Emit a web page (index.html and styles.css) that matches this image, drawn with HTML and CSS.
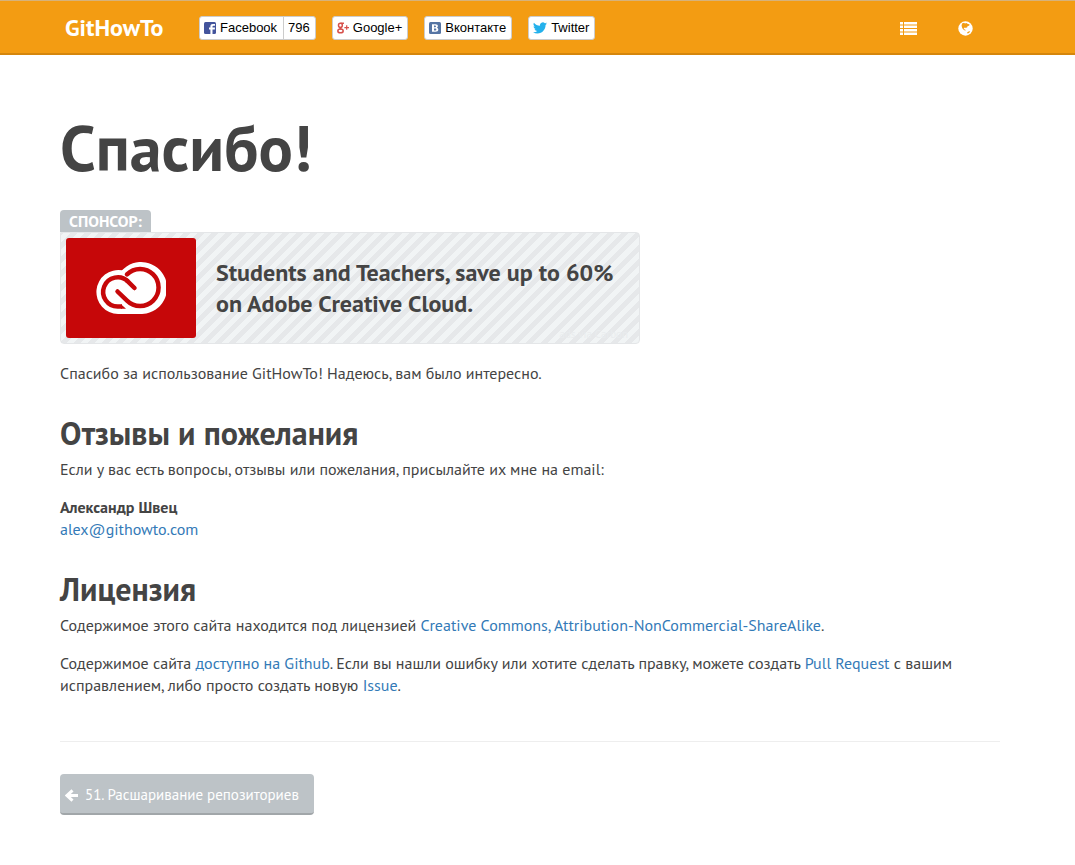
FILE: index.html
```html
<!DOCTYPE html>
<html lang="ru">
<head>
<meta charset="utf-8">
<title>GitHowTo — Спасибо!</title>
<link rel="stylesheet" href="styles.css">
</head>
<body>
<header class="navbar">
  <div class="container navbar-inner">
    <a class="brand" href="#">GitHowTo</a>
    <div class="likes">
      <button class="like" type="button">
        <svg class="like-icon" viewBox="0 0 12 12"><rect width="12" height="12" rx="1.5" fill="#43549c"/><path fill="#fff" d="M6.400 12V7.400H5V5.600h1.400V4.400C6.400 2.800 7.300 2 8.800 2H11v1.800H9.300c-.6 0-.8.3-.8.8v1H11l-.2 1.800H8.500V12z"/></svg>
        <span>Facebook</span><span class="like-count">796</span>
      </button>
      <button class="like" type="button">
        <svg class="like-icon" viewBox="0 0 13 12"><g fill="none" stroke="#d6504b" stroke-width="1.600"><ellipse cx="3.700" cy="3.100" rx="2.100" ry="2.300"/><path d="M4 .8h3.500M4.200 5.400c-1.500.6-1 1.200.6 1.900"/><ellipse cx="3.800" cy="9.200" rx="2.900" ry="2"/><path d="M8 5.500h5M10.500 3v5" stroke-width="1.300"/></g></svg>
        <span>Google+</span>
      </button>
      <button class="like" type="button">
        <svg class="like-icon" viewBox="0 0 12 12"><rect width="12" height="12" rx="1.5" fill="#5675a4"/><path fill="#fff" fill-rule="evenodd" d="M3 2.200h3.500c1.600 0 2.400.7 2.400 1.900 0 .8-.4 1.300-1 1.600.9.300 1.400.9 1.400 1.900 0 1.500-1 2.200-2.800 2.200H3zM5 3.600v1.600h1c.7 0 1-.3 1-.8s-.3-.8-1-.8zm0 2.900v1.900h1.200c.7 0 1.100-.3 1.100-1s-.4-.9-1.100-.9z"/></svg>
        <span>Вконтакте</span>
      </button>
      <button class="like" type="button">
        <svg class="like-icon twitter" viewBox="0 0 24 20"><path fill="#24b1ec" d="M24 2.400c-.9.400-1.800.6-2.800.8 1-.6 1.800-1.600 2.200-2.700-1 .6-2 1-3.100 1.200A4.900 4.900 0 0 0 12 6.100C7.700 5.900 4.100 3.900 1.700.9a4.900 4.900 0 0 0 1.500 6.600c-.8 0-1.600-.2-2.200-.6v.1c0 2.400 1.700 4.400 3.900 4.800-.7.200-1.500.2-2.200.1.600 2 2.400 3.400 4.600 3.400A9.900 9.900 0 0 1 0 17.300 14 14 0 0 0 7.500 19.500c9.100 0 14.300-7.700 14-14.600 1-.7 1.800-1.500 2.500-2.500z"/></svg>
        <span>Twitter</span>
      </button>
    </div>
    <nav class="tools">
      <a href="#" aria-label="Содержание"><svg width="17" height="13" viewBox="0 0 17 13" fill="#fff"><path d="M0 0h3v2.500H0zM4 0h13v2.500H4zM0 3.500h3V6H0zM4 3.500h13V6H4zM0 7h3v2.500H0zM4 7h13v2.500H4zM0 10.500h3V13H0zM4 10.500h13V13H4z"/></svg></a>
      <a href="#" aria-label="Язык"><svg width="15" height="15" viewBox="0 0 15 15"><circle cx="7.500" cy="7.500" r="7.200" fill="#fff"/><path fill="#f39c12" d="M4 2.600 6 1.800 7 2.500 8.300 2 10 3l1.500.2-.3 1.500-1.500.3-.5 1.300-1.500.8-.5-.5-1.400.4.200 1.200 1.200.4.400 1.200-1.700-.8L4.300 7.200 3.600 4.800zM9.200 11.300l2-1 1 .3-1.200 1.500-1.600.5z"/></svg></a>
    </nav>
  </div>
</header>
<main>
  <div class="container">
    <h1>Спасибо!</h1>
    <aside class="sponsor">
      <div class="sponsor-label">СПОНСОР:</div>
      <div class="sponsor-box">
        <a class="sponsor-logo" href="#" aria-label="Adobe Creative Cloud"><svg width="70" height="52" viewBox="0 0 70 52"><path fill="#fff" d="M22 52a22 22 0 1 1 4-43.700A26 26 0 1 1 44 52z"/><g fill="none" stroke="#c60709" stroke-width="4.500"><path d="M26 44.500H22A14.600 14.600 0 1 1 32 19.500"/><path d="M31 18.600 38.500 26M21.500 29.500 31 38.600A18.500 18.500 0 1 0 31 12.400" stroke-linecap="round"/></g><path fill="#c60709" d="M25 42.250l5 4.500h-5z"/></svg></a>
        <a class="sponsor-text" href="#">Students and Teachers, save up to 60% on Adobe Creative Cloud.</a>
        <a class="sponsor-via" href="#">ads via Carbon</a>
      </div>
    </aside>
    <p>Спасибо за использование GitHowTo! Надеюсь, вам было интересно.</p>
    <h2>Отзывы и пожелания</h2>
    <p>Если у вас есть вопросы, отзывы или пожелания, присылайте их мне на email:</p>
    <p><strong>Александр Швец</strong><br><a href="mailto:alex@githowto.com">alex@githowto.com</a></p>
    <h2>Лицензия</h2>
    <p>Содержимое этого сайта находится под лицензией <a href="#">Creative Commons, Attribution-NonCommercial-ShareAlike</a>.</p>
    <p>Содержимое сайта <a href="#">доступно на Github</a>. Если вы нашли ошибку или хотите сделать правку, можете создать <a href="#">Pull Request</a> с вашим исправлением, либо просто создать новую <a href="#">Issue</a>.</p>
    <hr>
    <a class="prev" href="#"><svg width="13" height="13" viewBox="0 0 13 13"><path d="M7.500 1.300 2 6.500l5.500 5.200M2.500 6.500H13" fill="none" stroke="#fff" stroke-width="3"/></svg><span>51. Расшаривание репозиториев</span></a>
  </div>
</main>
</body>
</html>
```
FILE: styles.css
```css
* { box-sizing: border-box; }
body { margin: 0; background: #fff; color: #444; font: 16px/22px "PT Sans", "Noto Sans", sans-serif; }
a { color: #337ab7; text-decoration: none; }
.navbar, main { padding-right: 15px; }
.container { max-width: 970px; margin: 0 auto; padding: 0 15px; }
.navbar { background: #f39c12; border-top: 1px solid #d6b27a; border-bottom: 2px solid #d5860c; }
.navbar-inner { display: flex; align-items: center; height: 52px; padding: 2px 20px 0; }
.brand { width: 134px; color: #fff; font-size: 24px; font-weight: 700; }
.likes { display: flex; gap: 16px; }
.like { display: flex; align-items: center; gap: 4px; height: 24px; padding: 0 5px 0 4px; border: 1px solid #ccc; border-radius: 3px; background: #fff; color: #000; font: 13px/22px "Liberation Sans", Arial, sans-serif; }
.like-icon { width: 12px; height: 12px; }
.like-icon.twitter { width: 14px; }
.like-count { align-self: stretch; margin-left: 2px; padding-left: 4px; border-left: 1px solid #ccc; }
.tools { display: flex; gap: 41px; margin-left: auto; padding-right: 22px; }
.tools a { display: flex; align-items: center; }
h1 { margin: 58px 0 27px; font-size: 64px; line-height: 70px; font-weight: 700; }
h2 { margin: 32px 0 8px; font-size: 32px; line-height: 34px; font-weight: 700; }
p { margin: 0 0 16px; }
.sponsor { max-width: 580px; margin-bottom: 18px; }
.sponsor-label { width: fit-content; padding: 0 9px; border-radius: 4px 4px 0 0; background: #bdc3c7; color: #fff; font-weight: 700; }
.sponsor-box { position: relative; display: flex; align-items: center; gap: 20px; padding: 5px; border: 1px solid #e4e6e8; border-radius: 0 4px 4px 4px; background: repeating-linear-gradient(-45deg, #f1f4f5 0 5px, #e6e8ea 5px 10px); }
.sponsor-logo { display: flex; align-items: center; justify-content: center; flex: none; width: 130px; height: 100px; border-radius: 3px; background: #c60709; }
.sponsor-text { color: #444; font-size: 24px; line-height: 31px; font-weight: 700; }
.sponsor-via { position: absolute; right: 11px; bottom: 3px; color: #e9ecee; font-size: 11px; line-height: 12px; }
hr { margin: 45px 0 32px; border: 0; border-top: 1px solid #eee; }
.prev { display: inline-flex; align-items: center; gap: 7px; padding: 10px 15px 7px 5px; border-bottom: 2px solid #a1a6a9; border-radius: 4px; background: #bdc3c7; color: #fff; font-size: 15px; }
```
